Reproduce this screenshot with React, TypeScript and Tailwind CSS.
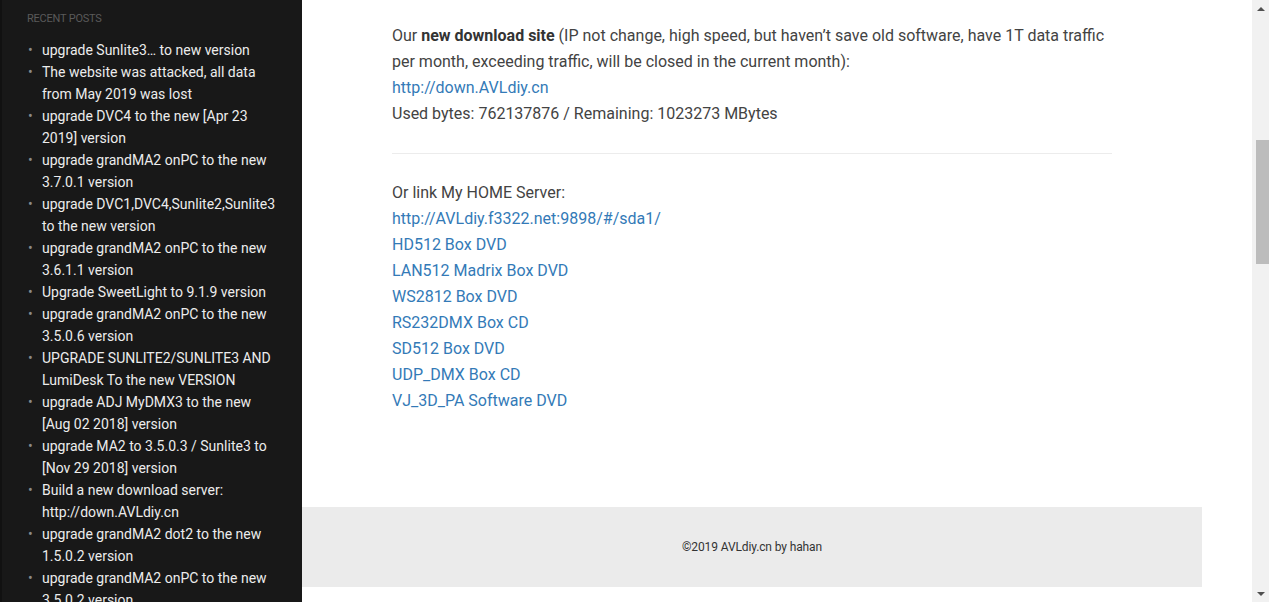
import React from 'react';

const RECENT_POSTS = [
  'upgrade Sunlite3… to new version',
  'The website was attacked, all data from May 2019 was lost',
  'upgrade DVC4 to the new [Apr 23 2019] version',
  'upgrade grandMA2 onPC to the new 3.7.0.1 version',
  'upgrade DVC1,DVC4,Sunlite2,Sunlite3 to the new version',
  'upgrade grandMA2 onPC to the new 3.6.1.1 version',
  'Upgrade SweetLight to 9.1.9 version',
  'upgrade grandMA2 onPC to the new 3.5.0.6 version',
  'UPGRADE SUNLITE2/SUNLITE3 AND LumiDesk To the new VERSION',
  'upgrade ADJ MyDMX3 to the new [Aug 02 2018] version',
  'upgrade MA2 to 3.5.0.3 / Sunlite3 to [Nov 29 2018] version',
  'Build a new download server: http://down.AVLdiy.cn',
  'upgrade grandMA2 dot2 to the new 1.5.0.2 version',
  'upgrade grandMA2 onPC to the new 3.5.0.2 version',
];

const HOME_LINKS = [
  'http://AVLdiy.f3322.net:9898/#/sda1/',
  'HD512 Box DVD',
  'LAN512 Madrix Box DVD',
  'WS2812 Box DVD',
  'RS232DMX Box CD',
  'SD512 Box DVD',
  'UDP_DMX Box CD',
  'VJ_3D_PA Software DVD',
];

function Sidebar() {
  return (
    <aside className="h-full w-[302px] shrink-0 overflow-hidden border-l-2 border-[#111111] bg-[#181818] pl-[25px] pr-[23px] pt-[12px]">
      <h3 className="text-[11px] uppercase leading-[14px] tracking-[-0.02em] text-[#5a5a5a]">Recent Posts</h3>
      <ul className="mt-[13px] flex flex-col">
        {RECENT_POSTS.map((post, i) => (
          <li key={i} className="flex text-[14px] leading-[22px] text-[#ececec]">
            <span className="w-[15px] shrink-0 pl-[1px] text-[#8a8a8a]">•</span>
            <a className="min-w-0">{post}</a>
          </li>
        ))}
      </ul>
    </aside>
  );
}

function Scrollbar() {
  return (
    <div className="flex h-full w-[17px] shrink-0 flex-col items-center bg-[#f1f1f1]">
      <div className="flex h-[17px] w-full items-center justify-center">
        <div className="h-0 w-0 border-x-[4px] border-b-[4px] border-x-transparent border-b-[#505050]" />
      </div>
      <div className="mt-[123px] ml-[3px] h-[124px] w-[13px] bg-[#bcbcbc]" />
      <div className="flex-1" />
      <div className="flex h-[17px] w-full items-center justify-center">
        <div className="h-0 w-0 border-x-[4px] border-t-[4px] border-x-transparent border-t-[#505050]" />
      </div>
    </div>
  );
}

export default function App() {
  return (
    <div
      className="flex h-[602px] w-full overflow-hidden bg-white"
      style={{ fontFamily: 'Roboto, "Liberation Sans", sans-serif' }}
    >
      <Sidebar />
      <main className="flex h-full min-w-0 flex-1 flex-col">
        <div className="w-[900px] px-[90px] pt-[23px] text-[16px] leading-[26px] text-[#434343]">
          <p>
            Our <strong className="font-bold text-[#333333]">new download site</strong> (IP not change, high
            speed, but haven’t save old software, have 1T data traffic per month, exceeding traffic, will be
            closed in the current month):
          </p>
          <p>
            <a className="text-[#337ab7]">http://down.AVLdiy.cn</a>
          </p>
          <p>Used bytes: 762137876 / Remaining: 1023273 MBytes</p>
          <hr className="mt-[26px] mb-[26px] border-t border-[#ececec]" />
          <p>Or link My HOME Server:</p>
          <ul className="flex flex-col">
            {HOME_LINKS.map((link) => (
              <li key={link}>
                <a className="text-[#337ab7]">{link}</a>
              </li>
            ))}
          </ul>
        </div>
        <div className="flex-1" />
        <footer className="flex h-[80px] w-[900px] items-center justify-center bg-[#ebebeb] text-[12px] tracking-[-0.01em] text-[#333333]">
          ©2019 AVLdiy.cn by hahan
        </footer>
        <div className="h-[15px]" />
      </main>
      <Scrollbar />
    </div>
  );
}
